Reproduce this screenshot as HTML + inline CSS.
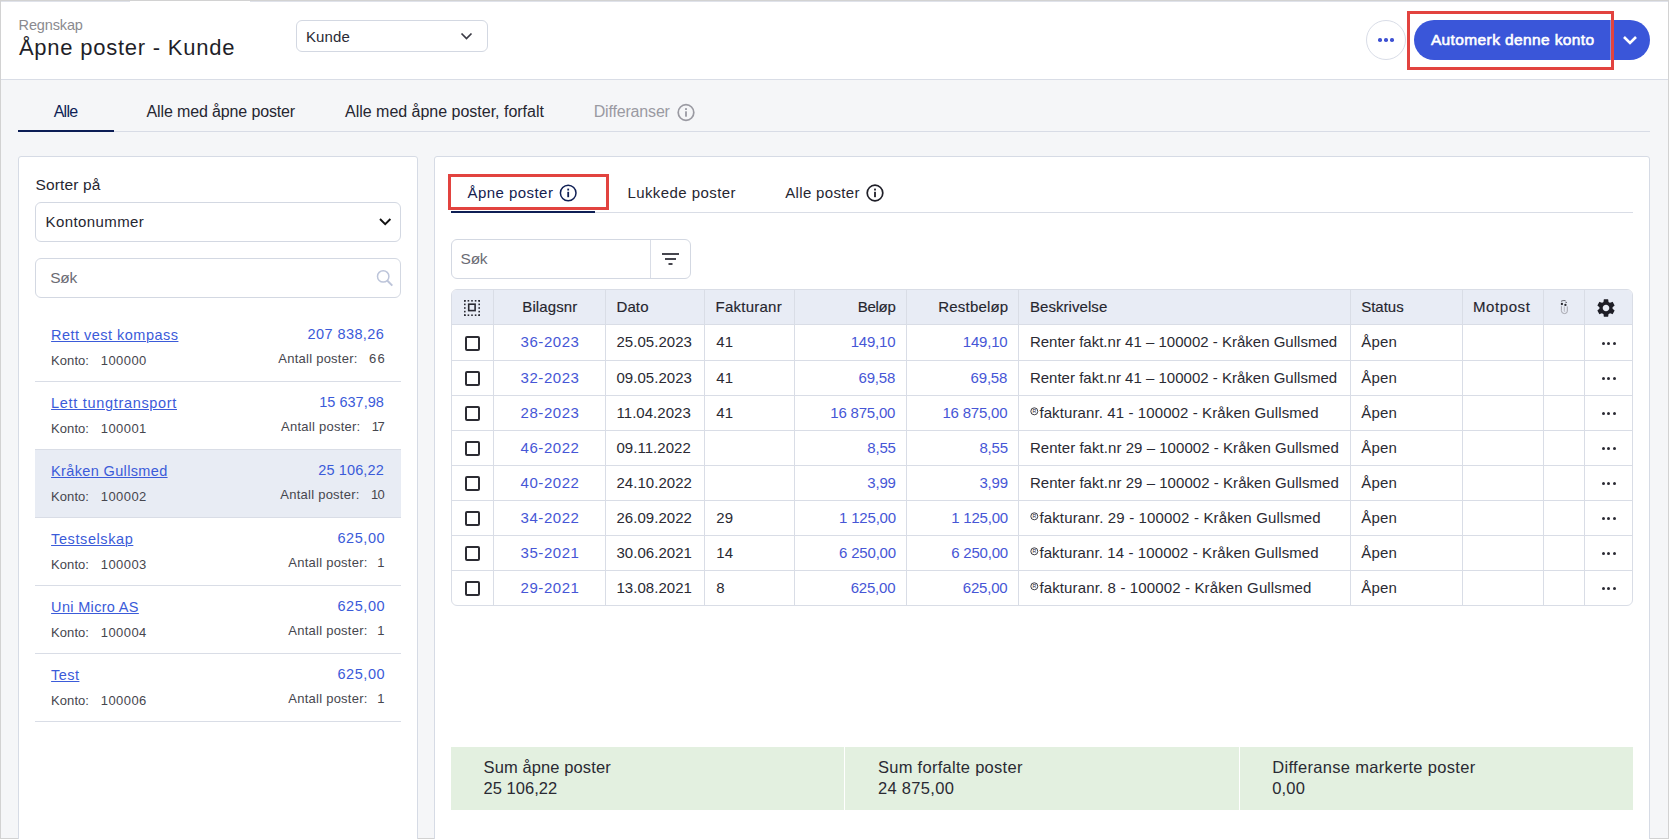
<!DOCTYPE html>
<html><head><meta charset="utf-8"><style>
html,body{margin:0;padding:0;width:1669px;height:839px;overflow:hidden;}
body{position:relative;font-family:"Liberation Sans",sans-serif;}
.t{position:absolute;white-space:nowrap;font-family:"Liberation Sans",sans-serif;line-height:normal;}
</style></head><body>
<div style="position:absolute;left:0px;top:0px;width:1669px;height:839px;background:#f5f6f8"></div>
<div style="position:absolute;left:0px;top:0px;width:1669px;height:79px;background:#ffffff"></div>
<div style="position:absolute;left:0px;top:79px;width:1669px;height:1px;background:#d9dde6"></div>
<div style="position:absolute;left:0px;top:0px;width:1669px;height:1px;background:#d2d2d2"></div>
<div style="position:absolute;left:0px;top:1px;width:130px;height:1px;background:#dfe2ea"></div>
<div style="position:absolute;left:250px;top:1px;width:1419px;height:1px;background:#dfe2ea"></div>
<div style="position:absolute;left:0px;top:0px;width:1px;height:839px;background:#d2d2d2"></div>
<div style="position:absolute;left:1668px;top:0px;width:1px;height:839px;background:#d2d2d2"></div>
<div style="position:absolute;left:0px;top:838px;width:1669px;height:1px;background:#d2d2d2"></div>
<div class="t" style="left:18.60px;top:16.68px;font-size:14.5px;color:#8a8a8f;letter-spacing:-0.143px;font-weight:400;">Regnskap</div>
<div class="t" style="left:18.90px;top:34.69px;font-size:22px;color:#1f1f29;letter-spacing:0.761px;font-weight:400;">Åpne poster - Kunde</div>
<div style="position:absolute;left:296px;top:20px;width:192px;height:32px;box-sizing:border-box;border:1px solid #d3d8e2;border-radius:6px;background:#fff"></div>
<div class="t" style="left:305.90px;top:28.02px;font-size:15px;color:#2a2a35;letter-spacing:0.125px;font-weight:400;">Kunde</div>
<svg style="position:absolute;left:459px;top:30px" width="15" height="12"><path d="M2.5 3.5 L7.5 8.5 L12.5 3.5" fill="none" stroke="#3a3a44" stroke-width="1.7"/></svg>
<div style="position:absolute;left:1366px;top:20px;width:40px;height:40px;box-sizing:border-box;border:1px solid #d9dde7;border-radius:50%;background:#fff"></div>
<div style="position:absolute;left:1378.05px;top:38.1px;width:3.5px;height:3.5px;border-radius:50%;background:#3f52d3"></div>
<div style="position:absolute;left:1384.25px;top:38.1px;width:3.5px;height:3.5px;border-radius:50%;background:#3f52d3"></div>
<div style="position:absolute;left:1390.45px;top:38.1px;width:3.5px;height:3.5px;border-radius:50%;background:#3f52d3"></div>
<div style="position:absolute;left:1414px;top:20px;width:236px;height:40px;background:#3a56d9;border-radius:20px"></div>
<div style="position:absolute;left:1609.5px;top:20px;width:1px;height:40px;background:#7d8fe6"></div>
<div class="t" style="left:1430.90px;top:30.77px;font-size:15.5px;color:#ffffff;letter-spacing:0.384px;font-weight:400;-webkit-text-stroke:0.6px #ffffff;">Automerk denne konto</div>
<svg style="position:absolute;left:1620px;top:32px" width="20" height="16"><path d="M4 5 L10 11 L16 5" fill="none" stroke="#ffffff" stroke-width="2.6"/></svg>
<div style="position:absolute;left:1407px;top:11px;width:207px;height:59px;box-sizing:border-box;border:3px solid #e2433f"></div>
<div class="t" style="left:53.70px;top:102.92px;font-size:16px;color:#0f1f55;letter-spacing:-0.767px;font-weight:400;">Alle</div>
<div class="t" style="left:146.50px;top:102.92px;font-size:16px;color:#262631;letter-spacing:-0.132px;font-weight:400;">Alle med åpne poster</div>
<div class="t" style="left:345.00px;top:102.92px;font-size:16px;color:#262631;letter-spacing:-0.011px;font-weight:400;">Alle med åpne poster, forfalt</div>
<div class="t" style="left:593.70px;top:102.92px;font-size:16px;color:#9a9aa2;letter-spacing:-0.170px;font-weight:400;">Differanser</div>
<svg style="position:absolute;left:676px;top:103px" width="20" height="20"><circle cx="10" cy="9.5" r="7.8" fill="none" stroke="#9a9aa2" stroke-width="1.7"/><rect x="9.1" y="5.1" width="1.8" height="1.9" fill="#9a9aa2"/><rect x="9.1" y="8.3" width="1.8" height="5.4" fill="#9a9aa2"/></svg>
<div style="position:absolute;left:18px;top:131px;width:1632px;height:1px;background:#d8dce6"></div>
<div style="position:absolute;left:18px;top:130px;width:96px;height:2px;background:#0b1d55"></div>
<div style="position:absolute;left:18px;top:156px;width:400px;height:700px;box-sizing:border-box;border:1px solid #d6dbe5;border-radius:3px;background:#fff"></div>
<div class="t" style="left:35.50px;top:175.97px;font-size:15.5px;color:#262631;letter-spacing:0.125px;font-weight:400;">Sorter på</div>
<div style="position:absolute;left:35px;top:202px;width:366px;height:40px;box-sizing:border-box;border:1px solid #d3d8e2;border-radius:6px;background:#fff"></div>
<div class="t" style="left:45.60px;top:213.12px;font-size:15px;color:#262631;letter-spacing:0.400px;font-weight:400;">Kontonummer</div>
<svg style="position:absolute;left:377px;top:215px" width="16" height="14"><path d="M3 4 L8.2 9.2 L13.4 4" fill="none" stroke="#111" stroke-width="1.9"/></svg>
<div style="position:absolute;left:35px;top:258px;width:366px;height:40px;box-sizing:border-box;border:1px solid #d3d8e2;border-radius:6px;background:#fff"></div>
<div class="t" style="left:50.30px;top:268.97px;font-size:15.5px;color:#6b6b74;letter-spacing:-0.300px;font-weight:400;">Søk</div>
<svg style="position:absolute;left:372px;top:265px" width="24" height="24"><circle cx="11.2" cy="11.4" r="5.7" fill="none" stroke="#bdc5da" stroke-width="1.5"/><path d="M15.2 15.5 L20.3 20.6" stroke="#bdc5da" stroke-width="2"/></svg>
<div style="position:absolute;left:35px;top:381px;width:366px;height:1px;background:#d9dde6"></div>
<div class="t" style="left:51.10px;top:326.78px;font-size:14.5px;color:#3b5bd9;letter-spacing:0.475px;font-weight:400;text-decoration:underline;text-underline-offset:1px;text-decoration-thickness:1px;">Rett vest kompass</div>
<div class="t" style="left:307.50px;top:325.58px;font-size:14.5px;color:#3b5bd9;letter-spacing:0.422px;font-weight:400;">207 838,26</div>
<div class="t" style="left:51.10px;top:352.94px;font-size:13px;color:#46464e;letter-spacing:0.060px;font-weight:400;">Konto:</div>
<div class="t" style="left:100.80px;top:352.94px;font-size:13px;color:#46464e;letter-spacing:0.420px;font-weight:400;">100000</div>
<div class="t" style="left:369.00px;top:350.84px;font-size:13px;color:#46464e;letter-spacing:1.300px;font-weight:400;">66</div>
<div class="t" style="left:278.30px;top:350.84px;font-size:13px;color:#46464e;letter-spacing:0.246px;font-weight:400;">Antall poster:</div>
<div style="position:absolute;left:35px;top:449px;width:366px;height:1px;background:#d9dde6"></div>
<div class="t" style="left:51.10px;top:394.78px;font-size:14.5px;color:#3b5bd9;letter-spacing:0.682px;font-weight:400;text-decoration:underline;text-underline-offset:1px;text-decoration-thickness:1px;">Lett tungtransport</div>
<div class="t" style="left:319.30px;top:393.58px;font-size:14.5px;color:#3b5bd9;letter-spacing:0.000px;font-weight:400;">15 637,98</div>
<div class="t" style="left:51.10px;top:420.94px;font-size:13px;color:#46464e;letter-spacing:0.060px;font-weight:400;">Konto:</div>
<div class="t" style="left:100.80px;top:420.94px;font-size:13px;color:#46464e;letter-spacing:0.420px;font-weight:400;">100001</div>
<div class="t" style="left:371.80px;top:418.84px;font-size:13px;color:#46464e;letter-spacing:-1.500px;font-weight:400;">17</div>
<div class="t" style="left:281.10px;top:418.84px;font-size:13px;color:#46464e;letter-spacing:0.246px;font-weight:400;">Antall poster:</div>
<div style="position:absolute;left:35px;top:450px;width:366px;height:67px;background:#e8ecf4"></div>
<div style="position:absolute;left:35px;top:517px;width:366px;height:1px;background:#d9dde6"></div>
<div class="t" style="left:51.10px;top:462.78px;font-size:14.5px;color:#3b5bd9;letter-spacing:0.350px;font-weight:400;text-decoration:underline;text-underline-offset:1px;text-decoration-thickness:1px;">Kråken Gullsmed</div>
<div class="t" style="left:318.20px;top:461.58px;font-size:14.5px;color:#3b5bd9;letter-spacing:0.137px;font-weight:400;">25 106,22</div>
<div class="t" style="left:51.10px;top:488.94px;font-size:13px;color:#46464e;letter-spacing:0.060px;font-weight:400;">Konto:</div>
<div class="t" style="left:100.80px;top:488.94px;font-size:13px;color:#46464e;letter-spacing:0.420px;font-weight:400;">100002</div>
<div class="t" style="left:371.00px;top:486.84px;font-size:13px;color:#46464e;letter-spacing:-0.700px;font-weight:400;">10</div>
<div class="t" style="left:280.30px;top:486.84px;font-size:13px;color:#46464e;letter-spacing:0.246px;font-weight:400;">Antall poster:</div>
<div style="position:absolute;left:35px;top:585px;width:366px;height:1px;background:#d9dde6"></div>
<div class="t" style="left:51.10px;top:530.78px;font-size:14.5px;color:#3b5bd9;letter-spacing:0.590px;font-weight:400;text-decoration:underline;text-underline-offset:1px;text-decoration-thickness:1px;">Testselskap</div>
<div class="t" style="left:337.50px;top:529.58px;font-size:14.5px;color:#3b5bd9;letter-spacing:0.560px;font-weight:400;">625,00</div>
<div class="t" style="left:51.10px;top:556.94px;font-size:13px;color:#46464e;letter-spacing:0.060px;font-weight:400;">Konto:</div>
<div class="t" style="left:100.80px;top:556.94px;font-size:13px;color:#46464e;letter-spacing:0.420px;font-weight:400;">100003</div>
<div class="t" style="left:377.30px;top:554.84px;font-size:13px;color:#46464e;letter-spacing:-1.700px;font-weight:400;">1</div>
<div class="t" style="left:288.30px;top:554.84px;font-size:13px;color:#46464e;letter-spacing:0.246px;font-weight:400;">Antall poster:</div>
<div style="position:absolute;left:35px;top:653px;width:366px;height:1px;background:#d9dde6"></div>
<div class="t" style="left:51.10px;top:598.78px;font-size:14.5px;color:#3b5bd9;letter-spacing:0.327px;font-weight:400;text-decoration:underline;text-underline-offset:1px;text-decoration-thickness:1px;">Uni Micro AS</div>
<div class="t" style="left:337.50px;top:597.58px;font-size:14.5px;color:#3b5bd9;letter-spacing:0.560px;font-weight:400;">625,00</div>
<div class="t" style="left:51.10px;top:624.94px;font-size:13px;color:#46464e;letter-spacing:0.060px;font-weight:400;">Konto:</div>
<div class="t" style="left:100.80px;top:624.94px;font-size:13px;color:#46464e;letter-spacing:0.420px;font-weight:400;">100004</div>
<div class="t" style="left:377.30px;top:622.84px;font-size:13px;color:#46464e;letter-spacing:-1.700px;font-weight:400;">1</div>
<div class="t" style="left:288.30px;top:622.84px;font-size:13px;color:#46464e;letter-spacing:0.246px;font-weight:400;">Antall poster:</div>
<div style="position:absolute;left:35px;top:721px;width:366px;height:1px;background:#d9dde6"></div>
<div class="t" style="left:51.10px;top:666.78px;font-size:14.5px;color:#3b5bd9;letter-spacing:0.433px;font-weight:400;text-decoration:underline;text-underline-offset:1px;text-decoration-thickness:1px;">Test</div>
<div class="t" style="left:337.50px;top:665.58px;font-size:14.5px;color:#3b5bd9;letter-spacing:0.560px;font-weight:400;">625,00</div>
<div class="t" style="left:51.10px;top:692.94px;font-size:13px;color:#46464e;letter-spacing:0.060px;font-weight:400;">Konto:</div>
<div class="t" style="left:100.80px;top:692.94px;font-size:13px;color:#46464e;letter-spacing:0.420px;font-weight:400;">100006</div>
<div class="t" style="left:377.30px;top:690.84px;font-size:13px;color:#46464e;letter-spacing:-1.700px;font-weight:400;">1</div>
<div class="t" style="left:288.30px;top:690.84px;font-size:13px;color:#46464e;letter-spacing:0.246px;font-weight:400;">Antall poster:</div>
<div style="position:absolute;left:434px;top:156px;width:1216px;height:700px;box-sizing:border-box;border:1px solid #d6dbe5;border-radius:3px;background:#fff"></div>
<div class="t" style="left:467.50px;top:184.33px;font-size:15px;color:#14214f;letter-spacing:0.450px;font-weight:400;">Åpne poster</div>
<svg style="position:absolute;left:558px;top:183.1px" width="20" height="20"><circle cx="10.2" cy="10" r="7.8" fill="none" stroke="#0f1f55" stroke-width="1.5"/><rect x="9.3" y="5.6" width="1.8" height="1.9" fill="#0f1f55"/><rect x="9.3" y="8.8" width="1.8" height="5.4" fill="#0f1f55"/></svg>
<div class="t" style="left:627.40px;top:184.33px;font-size:15px;color:#262631;letter-spacing:0.431px;font-weight:400;">Lukkede poster</div>
<div class="t" style="left:785.20px;top:184.33px;font-size:15px;color:#262631;letter-spacing:0.350px;font-weight:400;">Alle poster</div>
<svg style="position:absolute;left:864.6px;top:183.4px" width="20" height="20"><circle cx="10" cy="10" r="7.8" fill="none" stroke="#1f1f28" stroke-width="1.7"/><rect x="9.1" y="5.6" width="1.8" height="1.9" fill="#1f1f28"/><rect x="9.1" y="8.8" width="1.8" height="5.4" fill="#1f1f28"/></svg>
<div style="position:absolute;left:451px;top:212px;width:1182px;height:1px;background:#d9dde6"></div>
<div style="position:absolute;left:451px;top:211px;width:144px;height:2px;background:#0f1f55"></div>
<div style="position:absolute;left:448px;top:174px;width:161px;height:36px;box-sizing:border-box;border:3px solid #e2433f"></div>
<div style="position:absolute;left:451px;top:239px;width:240px;height:40px;box-sizing:border-box;border:1px solid #d3d8e2;border-radius:6px;background:#fff"></div>
<div style="position:absolute;left:650px;top:240px;width:1px;height:38px;background:#d9dde6"></div>
<div class="t" style="left:460.60px;top:250.17px;font-size:15.5px;color:#6b6b74;letter-spacing:-0.300px;font-weight:400;">Søk</div>
<svg style="position:absolute;left:660px;top:249.3px" width="22" height="20"><rect x="2" y="4" width="17" height="2" fill="#46464e"/><rect x="5" y="9" width="11" height="2" fill="#46464e"/><rect x="8.5" y="14" width="4" height="2" fill="#46464e"/></svg>
<div style="position:absolute;left:451px;top:289px;width:1182px;height:317px;box-sizing:border-box;border:1px solid #d9dde6;border-radius:6px;background:#fff;overflow:hidden"></div>
<div style="position:absolute;left:452px;top:290px;width:1180px;height:34px;background:#e8ecf5;border-radius:5px 5px 0 0"></div>
<div style="position:absolute;left:452px;top:324px;width:1180px;height:1px;background:#d9dde6"></div>
<div style="position:absolute;left:452px;top:360px;width:1180px;height:1px;background:#d9dde6"></div>
<div style="position:absolute;left:452px;top:395px;width:1180px;height:1px;background:#d9dde6"></div>
<div style="position:absolute;left:452px;top:430px;width:1180px;height:1px;background:#d9dde6"></div>
<div style="position:absolute;left:452px;top:465px;width:1180px;height:1px;background:#d9dde6"></div>
<div style="position:absolute;left:452px;top:500px;width:1180px;height:1px;background:#d9dde6"></div>
<div style="position:absolute;left:452px;top:535px;width:1180px;height:1px;background:#d9dde6"></div>
<div style="position:absolute;left:452px;top:570px;width:1180px;height:1px;background:#d9dde6"></div>
<div style="position:absolute;left:493px;top:290px;width:1px;height:315px;background:#d9dde6"></div>
<div style="position:absolute;left:605px;top:290px;width:1px;height:315px;background:#d9dde6"></div>
<div style="position:absolute;left:704px;top:290px;width:1px;height:315px;background:#d9dde6"></div>
<div style="position:absolute;left:794px;top:290px;width:1px;height:315px;background:#d9dde6"></div>
<div style="position:absolute;left:906px;top:290px;width:1px;height:315px;background:#d9dde6"></div>
<div style="position:absolute;left:1018px;top:290px;width:1px;height:315px;background:#d9dde6"></div>
<div style="position:absolute;left:1350px;top:290px;width:1px;height:315px;background:#d9dde6"></div>
<div style="position:absolute;left:1462px;top:290px;width:1px;height:315px;background:#d9dde6"></div>
<div style="position:absolute;left:1543px;top:290px;width:1px;height:315px;background:#d9dde6"></div>
<div style="position:absolute;left:1584px;top:290px;width:1px;height:315px;background:#d9dde6"></div>
<div class="t" style="left:522.30px;top:298.23px;font-size:15px;color:#26262f;letter-spacing:0.114px;font-weight:400;-webkit-text-stroke:0.15px #26262f;">Bilagsnr</div>
<div class="t" style="left:616.50px;top:298.23px;font-size:15px;color:#26262f;letter-spacing:0.100px;font-weight:400;-webkit-text-stroke:0.15px #26262f;">Dato</div>
<div class="t" style="left:715.50px;top:298.23px;font-size:15px;color:#26262f;letter-spacing:0.250px;font-weight:400;-webkit-text-stroke:0.15px #26262f;">Fakturanr</div>
<div class="t" style="left:857.70px;top:298.23px;font-size:15px;color:#26262f;letter-spacing:-0.250px;font-weight:400;-webkit-text-stroke:0.15px #26262f;">Beløp</div>
<div class="t" style="left:938.30px;top:298.23px;font-size:15px;color:#26262f;letter-spacing:0.188px;font-weight:400;-webkit-text-stroke:0.15px #26262f;">Restbeløp</div>
<div class="t" style="left:1029.90px;top:298.23px;font-size:15px;color:#26262f;letter-spacing:0.070px;font-weight:400;-webkit-text-stroke:0.15px #26262f;">Beskrivelse</div>
<div class="t" style="left:1361.20px;top:298.23px;font-size:15px;color:#26262f;letter-spacing:0.000px;font-weight:400;-webkit-text-stroke:0.15px #26262f;">Status</div>
<div class="t" style="left:1473.00px;top:298.23px;font-size:15px;color:#26262f;letter-spacing:0.583px;font-weight:400;-webkit-text-stroke:0.15px #26262f;">Motpost</div>
<svg style="position:absolute;left:463.2px;top:298.6px" width="19" height="19"><rect x="1.0" y="1.0" width="1.6" height="1.6" fill="#2a2a33"/><rect x="1.0" y="15.4" width="1.6" height="1.6" fill="#2a2a33"/><rect x="1.0" y="1.0" width="1.6" height="1.6" fill="#2a2a33"/><rect x="15.4" y="1.0" width="1.6" height="1.6" fill="#2a2a33"/><rect x="4.6" y="1.0" width="1.6" height="1.6" fill="#2a2a33"/><rect x="4.6" y="15.4" width="1.6" height="1.6" fill="#2a2a33"/><rect x="1.0" y="4.6" width="1.6" height="1.6" fill="#2a2a33"/><rect x="15.4" y="4.6" width="1.6" height="1.6" fill="#2a2a33"/><rect x="8.2" y="1.0" width="1.6" height="1.6" fill="#2a2a33"/><rect x="8.2" y="15.4" width="1.6" height="1.6" fill="#2a2a33"/><rect x="1.0" y="8.2" width="1.6" height="1.6" fill="#2a2a33"/><rect x="15.4" y="8.2" width="1.6" height="1.6" fill="#2a2a33"/><rect x="11.8" y="1.0" width="1.6" height="1.6" fill="#2a2a33"/><rect x="11.8" y="15.4" width="1.6" height="1.6" fill="#2a2a33"/><rect x="1.0" y="11.8" width="1.6" height="1.6" fill="#2a2a33"/><rect x="15.4" y="11.8" width="1.6" height="1.6" fill="#2a2a33"/><rect x="15.4" y="1.0" width="1.6" height="1.6" fill="#2a2a33"/><rect x="15.4" y="15.4" width="1.6" height="1.6" fill="#2a2a33"/><rect x="1.0" y="15.4" width="1.6" height="1.6" fill="#2a2a33"/><rect x="15.4" y="15.4" width="1.6" height="1.6" fill="#2a2a33"/><rect x="5.7" y="5.2" width="6.4" height="6.4" fill="none" stroke="#2a2a33" stroke-width="1.6"/></svg>
<svg style="position:absolute;left:1555px;top:296px" width="16" height="20"><path d="M6.4 10.2 V14.6 Q6.4 17.6 9.5 17.6 Q12.3 17.6 12.3 15.2 V10.4" fill="none" stroke="#9d9da5" stroke-width="0.9"/><path d="M9.3 10.5 V14.6 Q9.3 15.6 10.1 15.4" fill="none" stroke="#a8a8b0" stroke-width="0.8"/><path d="M6 5.3 Q8 4.2 10.5 4.6" fill="none" stroke="#55555c" stroke-width="0.9"/><path d="M10.3 6.1 L12 6.5" stroke="#55555c" stroke-width="0.9"/><circle cx="6.9" cy="8" r="1.15" fill="#2a2a30"/><circle cx="10.4" cy="8.9" r="1.15" fill="#2a2a30"/></svg>
<svg style="position:absolute;left:1594.5px;top:296.5px" width="22" height="22" viewBox="0 0 24 24"><path fill="#1e1e26" d="M19.14 12.94c.04-.3.06-.61.06-.94 0-.32-.02-.64-.07-.94l2.03-1.58a.49.49 0 0 0 .12-.61l-1.92-3.32a.49.49 0 0 0-.59-.22l-2.39.96c-.5-.38-1.03-.7-1.62-.94l-.36-2.54a.48.48 0 0 0-.48-.41h-3.84c-.24 0-.43.17-.47.41l-.36 2.54c-.59.24-1.13.57-1.62.94l-2.39-.96a.48.48 0 0 0-.59.22L2.74 8.87a.47.47 0 0 0 .12.61l2.03 1.58c-.05.3-.09.63-.09.94s.02.64.07.94l-2.03 1.58a.49.49 0 0 0-.12.61l1.92 3.32c.12.22.37.29.59.22l2.39-.96c.5.38 1.03.7 1.62.94l.36 2.54c.05.24.24.41.48.41h3.84c.24 0 .44-.17.47-.41l.36-2.54c.59-.24 1.13-.56 1.62-.94l2.39.96c.22.08.47 0 .59-.22l1.92-3.32c.12-.22.07-.47-.12-.61l-2.01-1.58zM12 15.6c-1.98 0-3.6-1.62-3.6-3.6s1.62-3.6 3.6-3.6 3.6 1.62 3.6 3.6-1.62 3.6-3.6 3.6z"/></svg>
<div style="position:absolute;left:465px;top:336.0px;width:15px;height:15px;box-sizing:border-box;border:2px solid #2c2c33;border-radius:2px;background:#fff"></div>
<div class="t" style="left:520.55px;top:332.93px;font-size:15px;color:#4656d6;letter-spacing:0.550px;font-weight:400;">36-2023</div>
<div class="t" style="left:616.50px;top:332.93px;font-size:15px;color:#2a2a33;letter-spacing:0.030px;font-weight:400;">25.05.2023</div>
<div class="t" style="left:716.30px;top:332.93px;font-size:15px;color:#2a2a33;letter-spacing:0.000px;font-weight:400;">41</div>
<div class="t" style="left:850.70px;top:332.93px;font-size:15px;color:#4656d6;letter-spacing:-0.200px;font-weight:400;">149,10</div>
<div class="t" style="left:962.80px;top:332.93px;font-size:15px;color:#4656d6;letter-spacing:-0.200px;font-weight:400;">149,10</div>
<div class="t" style="left:1029.90px;top:332.93px;font-size:15px;color:#2a2a33;letter-spacing:0.009px;font-weight:400;">Renter fakt.nr 41 – 100002 - Kråken Gullsmed</div>
<div class="t" style="left:1361.20px;top:332.93px;font-size:15px;color:#2a2a33;letter-spacing:0.200px;font-weight:400;">Åpen</div>
<div style="position:absolute;left:1601.7px;top:342.4px;width:3px;height:3px;border-radius:50%;background:#2a2a33"></div>
<div style="position:absolute;left:1607.1px;top:342.4px;width:3px;height:3px;border-radius:50%;background:#2a2a33"></div>
<div style="position:absolute;left:1612.5px;top:342.4px;width:3px;height:3px;border-radius:50%;background:#2a2a33"></div>
<div style="position:absolute;left:465px;top:371.0px;width:15px;height:15px;box-sizing:border-box;border:2px solid #2c2c33;border-radius:2px;background:#fff"></div>
<div class="t" style="left:520.55px;top:368.82px;font-size:15px;color:#4656d6;letter-spacing:0.550px;font-weight:400;">32-2023</div>
<div class="t" style="left:616.50px;top:368.82px;font-size:15px;color:#2a2a33;letter-spacing:0.030px;font-weight:400;">09.05.2023</div>
<div class="t" style="left:716.30px;top:368.82px;font-size:15px;color:#2a2a33;letter-spacing:0.000px;font-weight:400;">41</div>
<div class="t" style="left:858.50px;top:368.82px;font-size:15px;color:#4656d6;letter-spacing:-0.200px;font-weight:400;">69,58</div>
<div class="t" style="left:970.60px;top:368.82px;font-size:15px;color:#4656d6;letter-spacing:-0.200px;font-weight:400;">69,58</div>
<div class="t" style="left:1029.90px;top:368.82px;font-size:15px;color:#2a2a33;letter-spacing:0.009px;font-weight:400;">Renter fakt.nr 41 – 100002 - Kråken Gullsmed</div>
<div class="t" style="left:1361.20px;top:368.82px;font-size:15px;color:#2a2a33;letter-spacing:0.200px;font-weight:400;">Åpen</div>
<div style="position:absolute;left:1601.7px;top:377.4px;width:3px;height:3px;border-radius:50%;background:#2a2a33"></div>
<div style="position:absolute;left:1607.1px;top:377.4px;width:3px;height:3px;border-radius:50%;background:#2a2a33"></div>
<div style="position:absolute;left:1612.5px;top:377.4px;width:3px;height:3px;border-radius:50%;background:#2a2a33"></div>
<div style="position:absolute;left:465px;top:406.0px;width:15px;height:15px;box-sizing:border-box;border:2px solid #2c2c33;border-radius:2px;background:#fff"></div>
<div class="t" style="left:520.55px;top:403.82px;font-size:15px;color:#4656d6;letter-spacing:0.550px;font-weight:400;">28-2023</div>
<div class="t" style="left:616.50px;top:403.82px;font-size:15px;color:#2a2a33;letter-spacing:0.030px;font-weight:400;">11.04.2023</div>
<div class="t" style="left:716.30px;top:403.82px;font-size:15px;color:#2a2a33;letter-spacing:0.000px;font-weight:400;">41</div>
<div class="t" style="left:830.30px;top:403.82px;font-size:15px;color:#4656d6;letter-spacing:-0.200px;font-weight:400;">16 875,00</div>
<div class="t" style="left:942.40px;top:403.82px;font-size:15px;color:#4656d6;letter-spacing:-0.200px;font-weight:400;">16 875,00</div>
<div class="t" style="left:1039.40px;top:403.82px;font-size:15px;color:#2a2a33;letter-spacing:0.105px;font-weight:400;">fakturanr. 41 - 100002 - Kråken Gullsmed</div>
<svg style="position:absolute;left:1029.5px;top:407.20px" width="9" height="9"><circle cx="4.3" cy="4.3" r="3.5" fill="none" stroke="#2a2a33" stroke-width="0.9"/><text x="4.3" y="6.2" font-size="5.2" text-anchor="middle" fill="#2a2a33" font-family="Liberation Sans">R</text></svg>
<div class="t" style="left:1361.20px;top:403.82px;font-size:15px;color:#2a2a33;letter-spacing:0.200px;font-weight:400;">Åpen</div>
<div style="position:absolute;left:1601.7px;top:412.4px;width:3px;height:3px;border-radius:50%;background:#2a2a33"></div>
<div style="position:absolute;left:1607.1px;top:412.4px;width:3px;height:3px;border-radius:50%;background:#2a2a33"></div>
<div style="position:absolute;left:1612.5px;top:412.4px;width:3px;height:3px;border-radius:50%;background:#2a2a33"></div>
<div style="position:absolute;left:465px;top:441.0px;width:15px;height:15px;box-sizing:border-box;border:2px solid #2c2c33;border-radius:2px;background:#fff"></div>
<div class="t" style="left:520.55px;top:438.82px;font-size:15px;color:#4656d6;letter-spacing:0.550px;font-weight:400;">46-2022</div>
<div class="t" style="left:616.50px;top:438.82px;font-size:15px;color:#2a2a33;letter-spacing:0.030px;font-weight:400;">09.11.2022</div>
<div class="t" style="left:867.30px;top:438.82px;font-size:15px;color:#4656d6;letter-spacing:-0.200px;font-weight:400;">8,55</div>
<div class="t" style="left:979.40px;top:438.82px;font-size:15px;color:#4656d6;letter-spacing:-0.200px;font-weight:400;">8,55</div>
<div class="t" style="left:1029.90px;top:438.82px;font-size:15px;color:#2a2a33;letter-spacing:0.047px;font-weight:400;">Renter fakt.nr 29 – 100002 - Kråken Gullsmed</div>
<div class="t" style="left:1361.20px;top:438.82px;font-size:15px;color:#2a2a33;letter-spacing:0.200px;font-weight:400;">Åpen</div>
<div style="position:absolute;left:1601.7px;top:447.4px;width:3px;height:3px;border-radius:50%;background:#2a2a33"></div>
<div style="position:absolute;left:1607.1px;top:447.4px;width:3px;height:3px;border-radius:50%;background:#2a2a33"></div>
<div style="position:absolute;left:1612.5px;top:447.4px;width:3px;height:3px;border-radius:50%;background:#2a2a33"></div>
<div style="position:absolute;left:465px;top:476.0px;width:15px;height:15px;box-sizing:border-box;border:2px solid #2c2c33;border-radius:2px;background:#fff"></div>
<div class="t" style="left:520.55px;top:473.82px;font-size:15px;color:#4656d6;letter-spacing:0.550px;font-weight:400;">40-2022</div>
<div class="t" style="left:616.50px;top:473.82px;font-size:15px;color:#2a2a33;letter-spacing:0.030px;font-weight:400;">24.10.2022</div>
<div class="t" style="left:867.30px;top:473.82px;font-size:15px;color:#4656d6;letter-spacing:-0.200px;font-weight:400;">3,99</div>
<div class="t" style="left:979.40px;top:473.82px;font-size:15px;color:#4656d6;letter-spacing:-0.200px;font-weight:400;">3,99</div>
<div class="t" style="left:1029.90px;top:473.82px;font-size:15px;color:#2a2a33;letter-spacing:0.047px;font-weight:400;">Renter fakt.nr 29 – 100002 - Kråken Gullsmed</div>
<div class="t" style="left:1361.20px;top:473.82px;font-size:15px;color:#2a2a33;letter-spacing:0.200px;font-weight:400;">Åpen</div>
<div style="position:absolute;left:1601.7px;top:482.4px;width:3px;height:3px;border-radius:50%;background:#2a2a33"></div>
<div style="position:absolute;left:1607.1px;top:482.4px;width:3px;height:3px;border-radius:50%;background:#2a2a33"></div>
<div style="position:absolute;left:1612.5px;top:482.4px;width:3px;height:3px;border-radius:50%;background:#2a2a33"></div>
<div style="position:absolute;left:465px;top:511.0px;width:15px;height:15px;box-sizing:border-box;border:2px solid #2c2c33;border-radius:2px;background:#fff"></div>
<div class="t" style="left:520.55px;top:508.82px;font-size:15px;color:#4656d6;letter-spacing:0.550px;font-weight:400;">34-2022</div>
<div class="t" style="left:616.50px;top:508.82px;font-size:15px;color:#2a2a33;letter-spacing:0.030px;font-weight:400;">26.09.2022</div>
<div class="t" style="left:716.30px;top:508.82px;font-size:15px;color:#2a2a33;letter-spacing:0.000px;font-weight:400;">29</div>
<div class="t" style="left:839.10px;top:508.82px;font-size:15px;color:#4656d6;letter-spacing:-0.200px;font-weight:400;">1 125,00</div>
<div class="t" style="left:951.20px;top:508.82px;font-size:15px;color:#4656d6;letter-spacing:-0.200px;font-weight:400;">1 125,00</div>
<div class="t" style="left:1039.40px;top:508.82px;font-size:15px;color:#2a2a33;letter-spacing:0.156px;font-weight:400;">fakturanr. 29 - 100002 - Kråken Gullsmed</div>
<svg style="position:absolute;left:1029.5px;top:512.20px" width="9" height="9"><circle cx="4.3" cy="4.3" r="3.5" fill="none" stroke="#2a2a33" stroke-width="0.9"/><text x="4.3" y="6.2" font-size="5.2" text-anchor="middle" fill="#2a2a33" font-family="Liberation Sans">R</text></svg>
<div class="t" style="left:1361.20px;top:508.82px;font-size:15px;color:#2a2a33;letter-spacing:0.200px;font-weight:400;">Åpen</div>
<div style="position:absolute;left:1601.7px;top:517.4px;width:3px;height:3px;border-radius:50%;background:#2a2a33"></div>
<div style="position:absolute;left:1607.1px;top:517.4px;width:3px;height:3px;border-radius:50%;background:#2a2a33"></div>
<div style="position:absolute;left:1612.5px;top:517.4px;width:3px;height:3px;border-radius:50%;background:#2a2a33"></div>
<div style="position:absolute;left:465px;top:546.0px;width:15px;height:15px;box-sizing:border-box;border:2px solid #2c2c33;border-radius:2px;background:#fff"></div>
<div class="t" style="left:520.55px;top:543.82px;font-size:15px;color:#4656d6;letter-spacing:0.550px;font-weight:400;">35-2021</div>
<div class="t" style="left:616.50px;top:543.82px;font-size:15px;color:#2a2a33;letter-spacing:0.030px;font-weight:400;">30.06.2021</div>
<div class="t" style="left:716.30px;top:543.82px;font-size:15px;color:#2a2a33;letter-spacing:0.000px;font-weight:400;">14</div>
<div class="t" style="left:839.10px;top:543.82px;font-size:15px;color:#4656d6;letter-spacing:-0.200px;font-weight:400;">6 250,00</div>
<div class="t" style="left:951.20px;top:543.82px;font-size:15px;color:#4656d6;letter-spacing:-0.200px;font-weight:400;">6 250,00</div>
<div class="t" style="left:1039.40px;top:543.82px;font-size:15px;color:#2a2a33;letter-spacing:0.105px;font-weight:400;">fakturanr. 14 - 100002 - Kråken Gullsmed</div>
<svg style="position:absolute;left:1029.5px;top:547.20px" width="9" height="9"><circle cx="4.3" cy="4.3" r="3.5" fill="none" stroke="#2a2a33" stroke-width="0.9"/><text x="4.3" y="6.2" font-size="5.2" text-anchor="middle" fill="#2a2a33" font-family="Liberation Sans">R</text></svg>
<div class="t" style="left:1361.20px;top:543.82px;font-size:15px;color:#2a2a33;letter-spacing:0.200px;font-weight:400;">Åpen</div>
<div style="position:absolute;left:1601.7px;top:552.4px;width:3px;height:3px;border-radius:50%;background:#2a2a33"></div>
<div style="position:absolute;left:1607.1px;top:552.4px;width:3px;height:3px;border-radius:50%;background:#2a2a33"></div>
<div style="position:absolute;left:1612.5px;top:552.4px;width:3px;height:3px;border-radius:50%;background:#2a2a33"></div>
<div style="position:absolute;left:465px;top:581.0px;width:15px;height:15px;box-sizing:border-box;border:2px solid #2c2c33;border-radius:2px;background:#fff"></div>
<div class="t" style="left:520.55px;top:578.82px;font-size:15px;color:#4656d6;letter-spacing:0.550px;font-weight:400;">29-2021</div>
<div class="t" style="left:616.50px;top:578.82px;font-size:15px;color:#2a2a33;letter-spacing:0.030px;font-weight:400;">13.08.2021</div>
<div class="t" style="left:716.30px;top:578.82px;font-size:15px;color:#2a2a33;letter-spacing:0.000px;font-weight:400;">8</div>
<div class="t" style="left:850.70px;top:578.82px;font-size:15px;color:#4656d6;letter-spacing:-0.200px;font-weight:400;">625,00</div>
<div class="t" style="left:962.80px;top:578.82px;font-size:15px;color:#4656d6;letter-spacing:-0.200px;font-weight:400;">625,00</div>
<div class="t" style="left:1039.40px;top:578.82px;font-size:15px;color:#2a2a33;letter-spacing:0.137px;font-weight:400;">fakturanr. 8 - 100002 - Kråken Gullsmed</div>
<svg style="position:absolute;left:1029.5px;top:582.20px" width="9" height="9"><circle cx="4.3" cy="4.3" r="3.5" fill="none" stroke="#2a2a33" stroke-width="0.9"/><text x="4.3" y="6.2" font-size="5.2" text-anchor="middle" fill="#2a2a33" font-family="Liberation Sans">R</text></svg>
<div class="t" style="left:1361.20px;top:578.82px;font-size:15px;color:#2a2a33;letter-spacing:0.200px;font-weight:400;">Åpen</div>
<div style="position:absolute;left:1601.7px;top:587.4px;width:3px;height:3px;border-radius:50%;background:#2a2a33"></div>
<div style="position:absolute;left:1607.1px;top:587.4px;width:3px;height:3px;border-radius:50%;background:#2a2a33"></div>
<div style="position:absolute;left:1612.5px;top:587.4px;width:3px;height:3px;border-radius:50%;background:#2a2a33"></div>
<div style="position:absolute;left:451px;top:747px;width:1182px;height:63px;background:#e3f0e0"></div>
<div style="position:absolute;left:843.5px;top:747px;width:1.5px;height:63px;background:#ffffff"></div>
<div style="position:absolute;left:1238.5px;top:747px;width:1.5px;height:63px;background:#ffffff"></div>
<div class="t" style="left:483.60px;top:757.87px;font-size:16.5px;color:#2a2a33;letter-spacing:0.100px;font-weight:400;">Sum åpne poster</div>
<div class="t" style="left:483.60px;top:778.97px;font-size:16.5px;color:#2a2a33;letter-spacing:0.025px;font-weight:400;">25 106,22</div>
<div class="t" style="left:878.00px;top:757.87px;font-size:16.5px;color:#2a2a33;letter-spacing:0.278px;font-weight:400;">Sum forfalte poster</div>
<div class="t" style="left:878.00px;top:778.97px;font-size:16.5px;color:#2a2a33;letter-spacing:0.312px;font-weight:400;">24 875,00</div>
<div class="t" style="left:1272.20px;top:757.87px;font-size:16.5px;color:#2a2a33;letter-spacing:0.320px;font-weight:400;">Differanse markerte poster</div>
<div class="t" style="left:1272.20px;top:778.97px;font-size:16.5px;color:#2a2a33;letter-spacing:0.200px;font-weight:400;">0,00</div>
</body></html>
